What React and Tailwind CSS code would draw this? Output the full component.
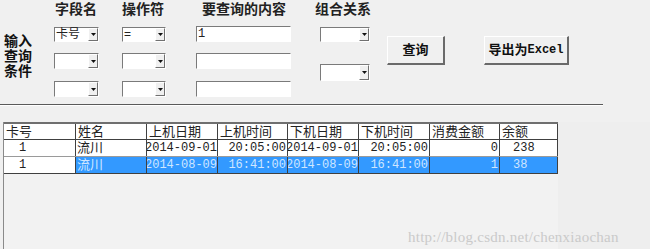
import React from "react";

const cjk = "font-['Liberation_Sans','Noto_Sans_CJK_SC',sans-serif]";
const mono = "font-['Liberation_Mono','Noto_Sans_CJK_SC',monospace]";

// Classic sunken combo box with a little drop button
const Combo = ({ width, height = 15, value = "", className = "" }) => (
  <div
    className={`flex bg-white border-t border-l border-t-[#7a7a7a] border-l-[#7a7a7a] border-b border-r border-b-white border-r-white ${className}`}
    style={{ width, height }}
  >
    <div className={`flex-1 pl-[1px] text-[12px] leading-[13px] text-[#222] ${cjk}`}>{value}</div>
    <div className="w-[10px] h-full flex items-center justify-center bg-[#f0f0f0] border-t border-l border-t-white border-l-white border-b border-r border-b-[#707070] border-r-[#707070]">
      <svg width="5" height="3" viewBox="0 0 5 3">
        <path d="M0 0 H5 L2.5 3 Z" fill="#111" />
      </svg>
    </div>
  </div>
);

const TextBox = ({ value = "", className = "" }) => (
  <div
    className={`w-[95px] h-[16px] bg-white border-t border-l border-t-[#7a7a7a] border-l-[#7a7a7a] border-b border-r border-b-white border-r-white pl-[1px] text-[12px] leading-[14px] text-[#222] ${mono} ${className}`}
  >
    {value}
  </div>
);

const Button = ({ children, className = "" }) => (
  <button
    className={`h-[29px] bg-[#f0f0f0] border-t border-l border-t-white border-l-white border-b-2 border-r-2 border-b-[#6a6a6a] border-r-[#6a6a6a] flex items-center justify-center text-[13px] font-bold text-[#111] ${cjk} ${className}`}
  >
    {children}
  </button>
);

const cols = [72, 71, 71, 70, 71, 71, 70, 58];
const headers = ["卡号", "姓名", "上机日期", "上机时间", "下机日期", "下机时间", "消费金额", "余额"];
const rows = [
  ["1", "流川", "2014-09-01", "20:05:00", "2014-09-01", "20:05:00", "0", "238"],
  ["1", "流川", "2014-08-09", "16:41:00", "2014-08-09", "16:41:00", "1", "38"],
];
// alignment per column: padded left, or right aligned
const align = ["pl-[15px]", "pl-[1px]", "justify-end", "justify-end pr-[1px]", "justify-end", "justify-end pr-[1px]", "justify-end pr-[1px]", "pl-[13px]"];

export default function App() {
  return (
    <div className="relative w-[650px] h-[249px] bg-[#f0f0f0] overflow-hidden">
      {/* query conditions */}
      <div className="flex h-[104px]">
        <div className={`w-[54px] pl-[4px] pt-[34px] text-[14px] leading-[15px] font-bold text-[#111] ${cjk}`}>
          <div className="h-[15px]">输入</div>
          <div className="h-[15px]">查询</div>
          <div className="h-[15px]">条件</div>
        </div>

        <div className="w-[45px] flex flex-col">
          <div className={`h-[27px] pt-[2px] pl-[1px] text-[14px] leading-[14px] font-bold text-[#222] ${cjk}`}>字段名</div>
          <Combo width={45} value="卡号" />
          <Combo width={45} height={16} className="mt-[11px]" />
          <Combo width={45} height={16} className="mt-[12px]" />
        </div>

        <div className="w-[44px] ml-[23px] flex flex-col">
          <div className={`h-[27px] pt-[2px] text-[14px] leading-[14px] font-bold text-[#222] whitespace-nowrap ${cjk}`}>操作符</div>
          <Combo width={44} value="=" />
          <Combo width={44} height={16} className="mt-[11px]" />
          <Combo width={44} height={16} className="mt-[12px]" />
        </div>

        <div className="w-[95px] ml-[30px] flex flex-col">
          <div className={`h-[26px] pt-[2px] pl-[6px] text-[14px] leading-[15px] font-bold text-[#222] whitespace-nowrap ${cjk}`}>要查询的内容</div>
          <TextBox value="1" />
          <TextBox className="mt-[11px]" />
          <TextBox className="mt-[12px]" />
        </div>

        <div className="w-[58px] ml-[24px] flex flex-col">
          <div className={`h-[27px] pt-[2px] text-[14px] leading-[15px] font-bold text-[#222] whitespace-nowrap ${cjk}`}>组合关系</div>
          <Combo width={50} className="ml-[5px]" />
          <Combo width={50} height={17} className="ml-[5px] mt-[22px]" />
        </div>

        <div className="flex pt-[36px] items-start">
          <Button className="w-[58px] ml-[14px]">查询</Button>
          <Button className="w-[85px] ml-[39px]">
            导出为<span className="font-['Liberation_Mono',monospace] text-[12px]">Excel</span>
          </Button>
        </div>
      </div>

      <div className="w-[603px] h-[1px] bg-[#5a5a5a]" />
      <div className="w-[603px] h-[1px] bg-white" />

      {/* result grid */}
      <div className="mt-[16px] ml-[3px] h-[200px] border-l border-l-[#8a8a8a] flex">
        <div className="w-[554px] h-full bg-[#f2f2f2]">
          <div className={`flex h-[18px] bg-white border-t-2 border-t-[#6f6f6f] border-b border-b-[#404040] text-[13px] leading-[15px] text-[#222] ${cjk}`}>
            {headers.map((h, i) => (
              <div key={h} className="pl-[2px] border-r border-r-[#404040] overflow-hidden whitespace-nowrap" style={{ width: cols[i] }}>
                {h}
              </div>
            ))}
          </div>
          {rows.map((r, ri) => (
            <div
              key={ri}
              className={`flex h-[17px] border-b ${ri === 0 ? "bg-white border-b-[#9a9a9a] text-[#222]" : "bg-[#3399ff] border-b-[#404040] text-[#cfe6ff]"} leading-[16px]`}
            >
              {r.map((c, ci) => (
                <div
                  key={ci}
                  className={`flex overflow-hidden whitespace-nowrap border-r border-r-[#404040] ${align[ci]} ${
                    /[0-9]/.test(c) ? `${mono} text-[12px]` : `${cjk} text-[13px]`
                  } ${ri === 1 && ci === 0 ? "bg-white text-[#222]" : ""}`}
                  style={{ width: cols[ci] }}
                >
                  {c}
                </div>
              ))}
            </div>
          ))}
        </div>
        <div className="flex-1 h-full bg-[#eeeeee]" />
      </div>

      {/* csdn watermark */}
      <div className="absolute left-[408px] top-[226px] text-[15px] tracking-[0.25px] text-[#cacaca] font-['Liberation_Serif',serif]">
        http://blog.csdn.net/chenxiaochan
      </div>
    </div>
  );
}
